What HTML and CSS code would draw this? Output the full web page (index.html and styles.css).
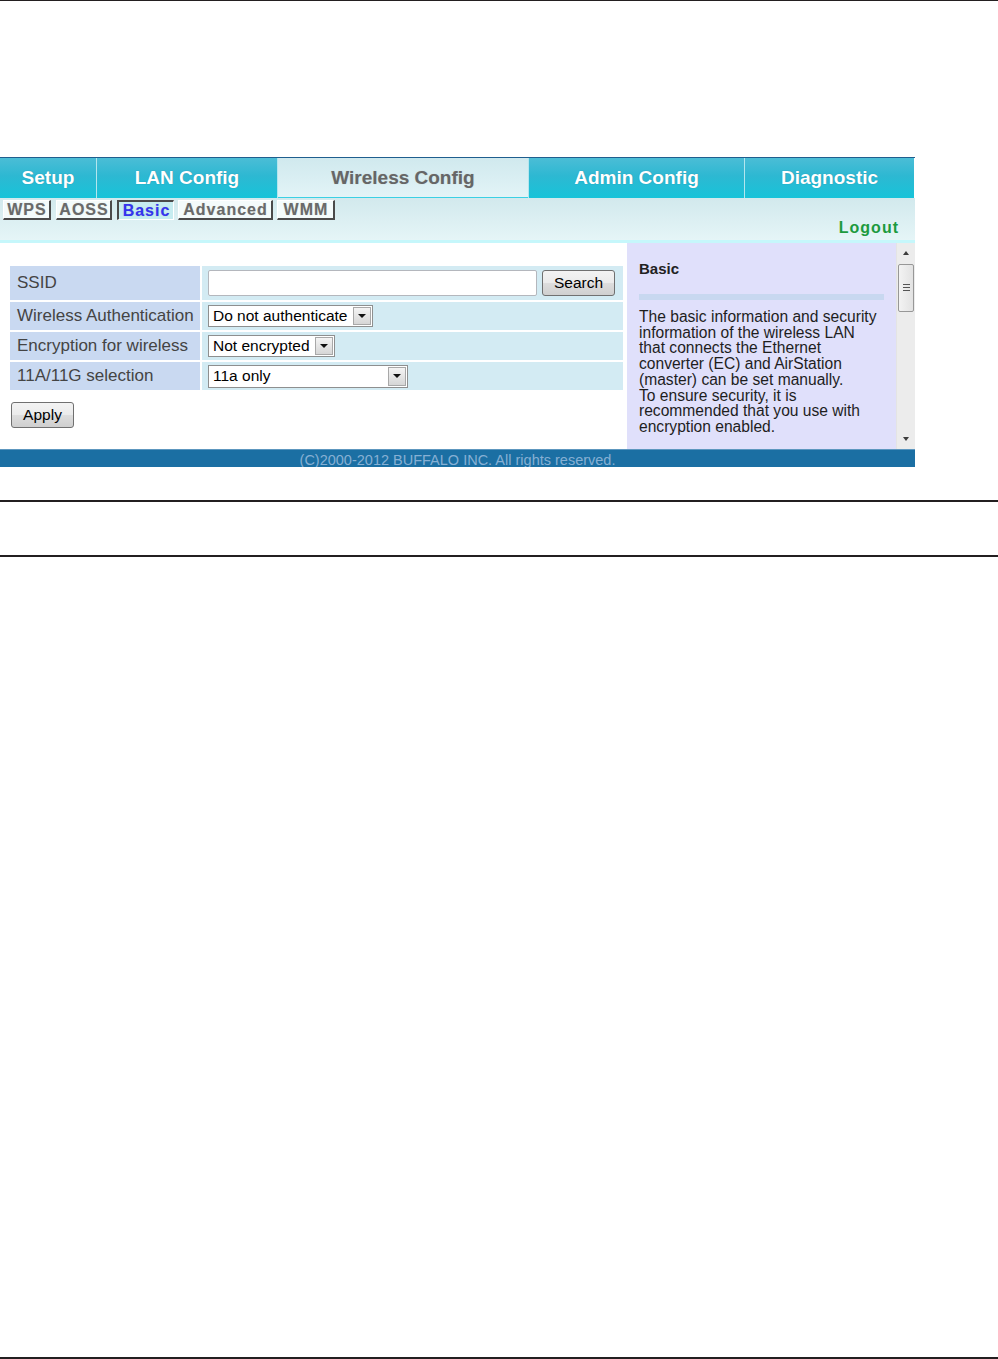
FILE: index.html
```html
<!DOCTYPE html>
<html lang="en">
<head>
<meta charset="utf-8">
<title>Wireless Config - Basic</title>
<link rel="stylesheet" href="styles.css">
</head>
<body>
<div class="rule rule-top"></div>
<div class="frame">
  <div class="tabs">
    <div class="tab t-setup">Setup</div>
    <div class="tab t-lan">LAN Config</div>
    <div class="tab t-wireless active">Wireless Config</div>
    <div class="tab t-admin">Admin Config</div>
    <div class="tab t-diag">Diagnostic</div>
  </div>
  <div class="subbar">
    <div class="subtabs">
      <span class="subtab st-wps">WPS</span>
      <span class="subtab st-aoss">AOSS</span>
      <span class="subtab st-basic active">Basic</span>
      <span class="subtab st-adv">Advanced</span>
      <span class="subtab st-wmm">WMM</span>
    </div>
    <div class="logout">Logout</div>
  </div>
  <div class="content">
    <div class="main">
      <div class="form">
        <div class="label row-first">SSID</div>
        <div class="value row-first">
          <input class="text-input" type="text" value="">
          <button class="btn btn-search" type="button">Search</button>
        </div>
        <div class="label">Wireless Authentication</div>
        <div class="value">
          <div class="select sel-auth"><span class="sel-text">Do not authenticate</span><span class="sel-arrow"></span></div>
        </div>
        <div class="label">Encryption for wireless</div>
        <div class="value">
          <div class="select sel-enc"><span class="sel-text">Not encrypted</span><span class="sel-arrow"></span></div>
        </div>
        <div class="label">11A/11G selection</div>
        <div class="value">
          <div class="select sel-mode"><span class="sel-text">11a only</span><span class="sel-arrow"></span></div>
        </div>
      </div>
      <button class="btn btn-apply" type="button">Apply</button>
    </div>
    <div class="help">
      <div class="help-title">Basic</div>
      <div class="help-divider"></div>
      <div class="help-text">The basic information and security information of the wireless LAN that connects the Ethernet converter (EC) and AirStation (master) can be set manually.<br>To ensure security, it is recommended that you use with encryption enabled.</div>
    </div>
    <div class="scrollbar">
      <div class="sb-btn"><span class="tri tri-up"></span></div>
      <div class="sb-thumb">
        <svg width="7" height="9" viewBox="0 0 7 9"><g fill="#555"><rect x="0" y="0" width="7" height="1"/><rect x="0" y="3" width="7" height="1"/><rect x="0" y="6" width="7" height="1"/></g></svg>
      </div>
      <div class="sb-track"></div>
      <div class="sb-btn"><span class="tri tri-down"></span></div>
    </div>
  </div>
  <div class="footer">(C)2000-2012 BUFFALO INC. All rights reserved.</div>
</div>
<div class="rule rule-mid1"></div>
<div class="rule rule-mid2"></div>
<div class="rule rule-bottom"></div>
</body>
</html>
```
FILE: styles.css
```css
* { box-sizing: border-box; }
html, body { margin: 0; padding: 0; background: #fff; }
body {
  width: 998px;
  font-family: "Liberation Sans", Arial, sans-serif;
  color: #000;
}

.rule { height: 2px; background: #231f20; width: 998px; }
.rule-top { height: 1px; }
.rule-mid1 { margin-top: 33px; }
.rule-mid2 { margin-top: 53px; }
.rule-bottom { margin-top: 800px; }

.frame {
  width: 915px;
  margin-top: 156px;
  border-top: 1px solid #1f5e8e;
}

/* main tabs */
.tabs { display: flex; width: 914px; height: 40px; }
.tab {
  height: 40px;
  line-height: 40px;
  text-align: center;
  font-size: 19px;
  font-weight: bold;
  color: #fff;
  background: linear-gradient(#4bbdd6 0%, #2db8d2 45%, #17c3d9 100%);
  border-left: 1px solid #b4e6ee;
  text-shadow: 0 0 1px rgba(20, 80, 110, 0.45);
}
.t-setup { width: 96px; border-left: 0; }
.t-lan { width: 181px; }
.t-wireless { width: 251px; }
.t-admin { width: 216px; }
.t-diag { width: 170px; }
.tab.active {
  color: #666;
  background: linear-gradient(#d0e9ee, #e3f4f7);
  box-shadow: inset 0 -1px 0 #3ad0e4;
  text-shadow: 0 0 1px rgba(120, 120, 120, 0.35);
}

/* sub bar */
.subbar {
  height: 45px;
  padding-top: 2px;
  background: linear-gradient(#d2e9ed, #e5f5f7);
  border-bottom: 3px solid #c6f7fb;
}
.subtabs { display: flex; padding-left: 3px; height: 20px; }
.subtab {
  display: block;
  height: 20px;
  line-height: 18px;
  font-size: 16px;
  font-weight: bold;
  letter-spacing: 1px;
  color: #6a6a6a;
  text-align: center;
  background: #f4fbfb;
  border-top: 1px solid #ffffff;
  border-left: 1px solid #ffffff;
  border-right: 2px solid #4a4a4a;
  border-bottom: 2px solid #4a4a4a;
  text-shadow: 0 0 1px rgba(90, 90, 90, 0.3);
  padding-left: 1px;
}
.subtab.active {
  color: #3434f0;
  background: #c6ecf0;
  border-top: 2px solid #4a4a4a;
  border-left: 2px solid #4a4a4a;
  border-right: 1px solid #ffffff;
  border-bottom: 1px solid #ffffff;
  line-height: 17px;
}
.st-wps { width: 48px; }
.st-aoss { width: 56px; margin-left: 5px; }
.st-basic { width: 57px; margin-left: 5px; }
.st-adv { width: 95px; margin-left: 4px; }
.st-wmm { width: 58px; margin-left: 4px; }

.logout {
  margin-top: -1px;
  line-height: 18px;
  text-align: right;
  padding-right: 16px;
  font-size: 16px;
  font-weight: bold;
  letter-spacing: 1px;
  color: #1d9a3e;
}

/* content */
.content { display: flex; height: 206px; }
.main { width: 627px; padding: 23px 0 0 10px; background: #fff; }

.form {
  display: grid;
  grid-template-columns: 190px 421px;
  grid-template-rows: 34px 28px 28px 28px;
  column-gap: 2px;
  row-gap: 2px;
  width: 613px;
}
.label {
  background: #c9d9f1;
  padding-left: 7px;
  font-size: 17px;
  color: #444;
  display: flex;
  align-items: center;
}
.value {
  background: #d3ebf3;
  padding-left: 6px;
  display: flex;
  align-items: center;
}

.text-input {
  width: 329px;
  height: 26px;
  margin: 0;
  border: 1px solid #b4b7bd;
  border-radius: 2px;
  background: #fff;
  font-family: "Liberation Sans", Arial, sans-serif;
  font-size: 15.5px;
  padding: 0 4px;
}

.btn {
  height: 26px;
  margin: 0;
  padding: 0;
  border: 1px solid #707070;
  border-radius: 3px;
  background: linear-gradient(#f3f3f3 0%, #ebebeb 48%, #dddddd 52%, #cfcfcf 100%);
  font-family: "Liberation Sans", Arial, sans-serif;
  font-size: 15.5px;
  color: #000;
  text-align: center;
}
.btn-search { width: 73px; margin-left: 5px; }
.btn-apply { display: block; width: 63px; margin-top: 12px; margin-left: 1px; }

.select {
  display: flex;
  height: 22px;
  border: 1px solid #8e8f8f;
  background: #fff;
}
.sel-auth { width: 165px; }
.sel-enc { width: 127px; }
.sel-mode { width: 200px; height: 23px; }
.sel-text {
  flex: 1;
  padding-left: 4px;
  font-size: 15.5px;
  line-height: 20px;
  white-space: nowrap;
  overflow: hidden;
}
.sel-arrow {
  width: 18px;
  margin: 1px;
  border: 1px solid #a8a8a8;
  background: linear-gradient(#f4f4f4, #d6d6d6);
  display: flex;
  align-items: center;
  justify-content: center;
}
.sel-arrow::after {
  content: "";
  width: 0;
  height: 0;
  border-left: 4px solid transparent;
  border-right: 4px solid transparent;
  border-top: 4px solid #111;
}

/* help panel */
.help {
  width: 269px;
  background: #e0e0fb;
  padding: 17px 0 0 12px;
}
.help-title {
  font-size: 15px;
  font-weight: bold;
  line-height: 18px;
  color: #222;
}
.help-divider {
  margin-top: 16px;
  width: 245px;
  height: 6px;
  background: #c8d8f0;
}
.help-text {
  margin-top: 9px;
  width: 241px;
  font-size: 15.6px;
  line-height: 15.7px;
  color: #1e1e1e;
}

/* scrollbar */
.scrollbar {
  width: 19px;
  background: #ececec;
  display: flex;
  flex-direction: column;
  border-left: 1px solid #e4e4e4;
}
.sb-btn {
  height: 20px;
  display: flex;
  align-items: center;
  justify-content: center;
}
.sb-track { flex: 1; }
.sb-thumb {
  margin: 1px 1px 0 1px;
  height: 48px;
  border: 1px solid #979797;
  border-radius: 2px;
  background: linear-gradient(90deg, #f3f3f3, #e2e2e2);
  display: flex;
  align-items: center;
  justify-content: center;
}
.tri { width: 0; height: 0; border-left: 3.5px solid transparent; border-right: 3.5px solid transparent; }
.tri-up { border-bottom: 4px solid #3c3c3c; }
.tri-down { border-top: 4px solid #3c3c3c; }

/* footer */
.footer {
  height: 18px;
  padding-top: 3px;
  line-height: 15px;
  background: #1b6fa3;
  border-top: 1px solid #5d97bf;
  color: #86b0d4;
  font-size: 14.5px;
  text-align: center;
  white-space: nowrap;
  overflow: hidden;
}
```
